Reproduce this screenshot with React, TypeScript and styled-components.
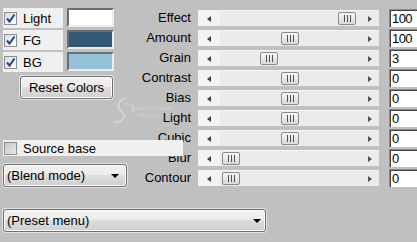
import React from "react";
import styled, { createGlobalStyle } from "styled-components";

const Global = createGlobalStyle`
  html, body { margin: 0; padding: 0; background: #c0c0c0; overflow: hidden; }
  body { font-family: "Liberation Sans", Arial, sans-serif; font-size: 13px; color: #000; }
`;

const Page = styled.div`
  width: 417px;
  height: 242px;
  position: relative;
  padding: 8px 0 0 3px;
  box-sizing: border-box;
`;

const Top = styled.div`
  display: flex;
  align-items: flex-start;
`;

const LeftCol = styled.div`
  width: 127px;
  flex: none;
  display: flex;
  flex-direction: column;
`;

const ColorRow = styled.div`
  display: flex;
  height: 20px;
  margin-bottom: 2px;
`;

const CheckPanel = styled.label`
  width: 60px;
  height: 20px;
  background: #f0f0f0;
  display: flex;
  align-items: center;
  gap: 6px;
  padding-left: 1px;
  box-sizing: border-box;
`;

const Box = styled.span<{ $checked?: boolean }>`
  width: 13px;
  height: 13px;
  box-sizing: border-box;
  border: 1px solid #8e8f8f;
  background: ${(p) => (p.$checked ? "linear-gradient(135deg, #dcdcdc, #ffffff)" : "linear-gradient(135deg, #c8c8c8, #e8e8e8)")};
  display: flex;
  align-items: center;
  justify-content: center;
  flex: none;
`;

const Swatch = styled.div<{ $color: string }>`
  width: 47px;
  height: 19px;
  margin-left: 4px;
  box-sizing: border-box;
  background: ${(p) => p.$color};
  border: 2px solid;
  border-color: #6e6e6e #ececec #ececec #6e6e6e;
`;

const ResetButton = styled.button`
  margin: 2px 0 0 17px;
  width: 93px;
  height: 23px;
  box-sizing: border-box;
  border: 1px solid #707070;
  border-radius: 3px;
  background: linear-gradient(#f2f2f2 0%, #ebebeb 50%, #dddddd 50%, #cfcfcf 100%);
  box-shadow: 0 0 0 1px #e6e6e6, inset 0 0 0 1px #fbfbfb;
  font-family: "Liberation Sans", Arial, sans-serif;
  font-size: 13px;
  padding: 0;
  color: #000;
`;

const SourcePanel = styled.label`
  position: relative;
  z-index: 1;
  margin-top: 41px;
  width: 180px;
  height: 16px;
  background: #f0f0f0;
  display: flex;
  align-items: center;
  gap: 6px;
  padding-left: 1px;
  box-sizing: border-box;
`;

const Dropdown = styled.div<{ $width: number }>`
  width: ${(p) => p.$width}px;
  height: 23px;
  box-sizing: border-box;
  border: 1px solid #707070;
  border-radius: 3px;
  background: linear-gradient(#f2f2f2 0%, #ebebeb 50%, #dddddd 50%, #cfcfcf 100%);
  box-shadow: 0 0 0 1px #e2e2e2, inset 0 0 0 1px #fafafa;
  display: flex;
  align-items: center;
  justify-content: space-between;
  padding: 0 7px 0 3px;
`;

const BlendDropdown = styled(Dropdown)`
  margin-top: 8px;
`;

const PresetDropdown = styled(Dropdown)`
  margin-top: 21px;
  padding-right: 4px;
`;

const Caret = styled.span`
  width: 0;
  height: 0;
  border-left: 4px solid transparent;
  border-right: 4px solid transparent;
  border-top: 4px solid #000;
`;

const RightCol = styled.div`
  display: grid;
  grid-template-columns: 60px 189px 40px;
  grid-auto-rows: 20px;
`;

const Label = styled.div`
  text-align: right;
  line-height: 20px;
  white-space: nowrap;
  margin-right: -1px;
`;

const Track = styled.div`
  position: relative;
  margin: 2px 0 2px 8px;
  width: 181px;
  height: 16px;
  display: flex;
  background: #ebebeb;
  border-top: 1px solid #f6f6f6;
  box-sizing: border-box;
`;

const ArrowZone = styled.div<{ $light?: boolean; $right?: boolean }>`
  width: 22px;
  height: 100%;
  background: ${(p) => (p.$light ? "#f3f3f3" : "#ebebeb")};
  display: flex;
  align-items: center;
  padding-left: ${(p) => (p.$right ? 11 : 9)}px;
  box-sizing: border-box;
`;

const Mid = styled.div`
  flex: 1;
`;

const LeftArrow = styled.span`
  width: 0;
  height: 0;
  border-top: 3.5px solid transparent;
  border-bottom: 3.5px solid transparent;
  border-right: 4px solid #404040;
`;

const RightArrow = styled.span`
  width: 0;
  height: 0;
  border-top: 3.5px solid transparent;
  border-bottom: 3.5px solid transparent;
  border-left: 4px solid #505050;
`;

const Thumb = styled.div`
  position: absolute;
  top: 1px;
  width: 18px;
  height: 13px;
  box-sizing: border-box;
  border: 1px solid #8a8a8a;
  border-radius: 2px;
  background: linear-gradient(#f6f6f6, #dadada);
  display: flex;
  align-items: center;
  justify-content: center;
  gap: 2px;
`;

const Grip = styled.span`
  width: 1px;
  height: 7px;
  background: #505050;
`;

const ValueBox = styled.div`
  margin: 1px 0 1px 10px;
  width: 30px;
  height: 18px;
  box-sizing: border-box;
  background: #fff;
  border-top: 1px solid #8a8a8a;
  border-left: 1px solid #8a8a8a;
  box-shadow: inset 1px 1px 0 #404040;
  padding-left: 2px;
  line-height: 17px;
  letter-spacing: -0.6px;
`;

const Watermark = styled.svg`
  position: absolute;
  left: 112px;
  top: 94px;
  pointer-events: none;
`;

const Check = () => (
  <svg width="11" height="11" viewBox="0 0 11 11">
    <path d="M2 5.5 L4.5 8.5 L9.5 1.5" fill="none" stroke="#23449c" strokeWidth="2" />
  </svg>
);

const colorRows = [
  { label: "Light", color: "#ffffff" },
  { label: "FG", color: "#335777" },
  { label: "BG", color: "#93c3d7" },
];

const sliders = [
  { label: "Effect", pos: 140, value: "100" },
  { label: "Amount", pos: 83, value: "100" },
  { label: "Grain", pos: 62, value: "3" },
  { label: "Contrast", pos: 83, value: "0" },
  { label: "Bias", pos: 83, value: "0" },
  { label: "Light", pos: 83, value: "0" },
  { label: "Cubic", pos: 83, value: "0" },
  { label: "Blur", pos: 24, value: "0" },
  { label: "Contour", pos: 24, value: "0" },
];

export default function App() {
  return (
    <Page>
      <Global />
      <Top>
        <LeftCol>
          {colorRows.map((r) => (
            <ColorRow key={r.label}>
              <CheckPanel>
                <Box $checked>
                  <Check />
                </Box>
                {r.label}
              </CheckPanel>
              <Swatch $color={r.color} />
            </ColorRow>
          ))}
          <ResetButton>Reset Colors</ResetButton>
          <SourcePanel>
            <Box />
            Source base
          </SourcePanel>
          <BlendDropdown $width={124}>
            <span>(Blend mode)</span>
            <Caret />
          </BlendDropdown>
        </LeftCol>
        <RightCol>
          {sliders.map((s) => (
            <React.Fragment key={s.label}>
              <Label>{s.label}</Label>
              <Track>
                <ArrowZone $light>
                  <LeftArrow />
                </ArrowZone>
                <Mid />
                <ArrowZone $right>
                  <RightArrow />
                </ArrowZone>
                <Thumb style={{ left: s.pos }}>
                  <Grip />
                  <Grip />
                  <Grip />
                </Thumb>
              </Track>
              <ValueBox>{s.value}</ValueBox>
            </React.Fragment>
          ))}
        </RightCol>
      </Top>
      <PresetDropdown $width={263}>
        <span>(Preset menu)</span>
        <Caret />
      </PresetDropdown>
      <Watermark width="70" height="35" viewBox="0 0 70 35">
        <path d="M14 4 C6 6 4 14 10 18 C16 22 8 30 2 28" fill="none" stroke="#d4d4d4" strokeWidth="2" />
        <path d="M12 10 C18 8 24 12 20 18" fill="none" stroke="#cfcfcf" strokeWidth="1.5" />
        <text x="20" y="16" fontSize="6" fill="#d2d2d2" fontFamily="Liberation Sans, sans-serif">GraphicsStudio</text>
        <text x="26" y="23" fontSize="6" fill="#d2d2d2" fontFamily="Liberation Sans, sans-serif">Plugins</text>
      </Watermark>
    </Page>
  );
}
